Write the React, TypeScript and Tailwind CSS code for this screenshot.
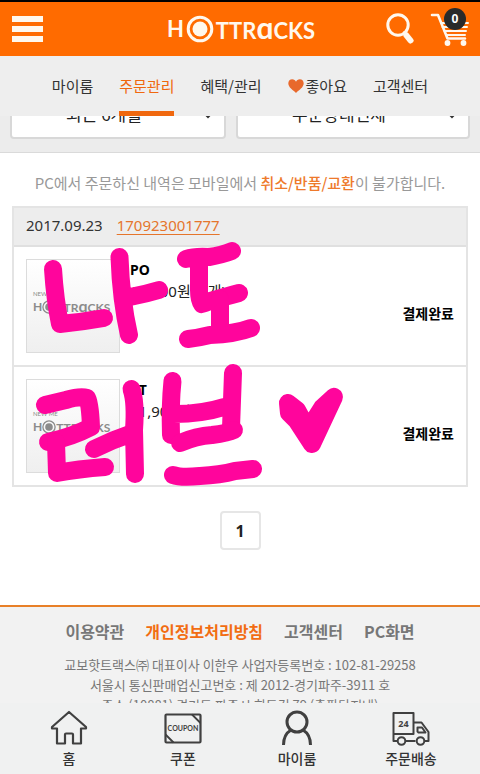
import React from 'react';
import clsx from 'clsx';

const tabs = [
  { label: '마이룸' },
  { label: '주문관리', active: true },
  { label: '혜택/관리' },
  { label: '좋아요', heart: true },
  { label: '고객센터' },
];

const orders = [
  { name: 'PO', price: '11,900원 (1개)', status: '결제완료' },
  { name: 'PT', price: '11,900원', status: '결제완료' },
];

const footerLinks = [
  { label: '이용약관' },
  { label: '개인정보처리방침', active: true },
  { label: '고객센터' },
  { label: 'PC화면' },
];

function Logo() {
  return (
    <a href="#home" className="flex h-8 items-center gap-0.5 font-['Lato',sans-serif] text-[22px] leading-8 font-bold text-[#fff8ee]">
      <span>H</span>
      <svg viewBox="0 0 28 28" className="size-7" aria-label="O">
        <circle cx="14" cy="14" r="11.800" fill="none" stroke="#fff8ee" strokeWidth="3" />
        <circle cx="14" cy="14" r="7.500" fill="#fff8ee" />
      </svg>
      <span>
        TTR<span className="text-[30px] leading-none">ɑ</span>CKS
      </span>
    </a>
  );
}

function ThumbLogo() {
  return (
    <div className="flex size-[94px] shrink-0 flex-col justify-center border border-[#dcdcdc] bg-linear-to-b from-white to-[#efefef] pb-1.5 pl-[6px] font-['Lato',sans-serif] text-[#8b8b8b]">
      <span className="text-[6px] leading-[8px]">NEW ME</span>
      <span className="flex items-center text-xs leading-4 font-bold">
        <span>H</span>
        <svg viewBox="0 0 14 14" className="size-[14px] shrink-0">
          <circle cx="7" cy="7" r="6.1" fill="none" stroke="currentColor" strokeWidth="1.3" />
          <circle cx="7" cy="7" r="3.8" fill="currentColor" />
        </svg>
        <span>
          TTR<span className="text-base leading-none">ɑ</span>CKS
        </span>
      </span>
    </div>
  );
}

function SearchIcon() {
  return (
    <svg viewBox="0 0 28 32" className="h-8 w-7" fill="none" stroke="#fff8ee" strokeLinecap="round">
      <circle cx="12" cy="12" r="10.2" strokeWidth="3" />
      <path d="M18.5 19.5l2 2.5" strokeWidth="3" />
      <path d="M20.5 22.5l4 5" strokeWidth="6" />
    </svg>
  );
}

function CartIcon() {
  return (
    <svg viewBox="0 0 40 34" className="h-[34px] w-10" fill="none" stroke="#fff8ee" strokeWidth="2.6" strokeLinecap="round" strokeLinejoin="round">
      <path d="M2 3h6l9.500 23.500h17.500" />
      <path d="M11 11h27M12.500 15h24.500M14.500 19h21.500M16 23h19" strokeWidth="2" />
      <circle cx="17.500" cy="31" r="2.900" fill="#fff8ee" stroke="none" />
      <circle cx="33.500" cy="31" r="2.900" fill="#fff8ee" stroke="none" />
    </svg>
  );
}

function HomeIcon() {
  return (
    <svg viewBox="0 0 38 36" className="h-9 w-[38px]" fill="none" stroke="#404040" strokeWidth="2.200" strokeLinejoin="round">
      <path d="M19 2L2 17v1.500h5V33.500h8V24.500q0-1 1-1h6q1 0 1 1V33.500h8V18.500h5V17z" />
    </svg>
  );
}

function CouponIcon() {
  return (
    <svg viewBox="0 0 38 36" className="h-9 w-[38px]" fill="none" stroke="#404040" strokeWidth="2.200">
      <rect x="1.500" y="4.500" width="35" height="28" rx="1" />
      <path d="M28 4.500l8.500 8.500M1.500 24.500l8 8" strokeWidth="1.800" />
      <text x="19" y="21" textAnchor="middle" fontSize="7" fontWeight="700" fill="#404040" stroke="none" fontFamily="Lato, sans-serif">
        COUPON
      </text>
    </svg>
  );
}

function PersonIcon() {
  return (
    <svg viewBox="0 0 38 36" className="h-9 w-[38px]" fill="none" stroke="#404040" strokeWidth="3">
      <circle cx="19" cy="12" r="10" />
      <path d="M5.500 35c0-6.500 2.500-12 7.500-15M32.500 35c0-6.500-2.500-12-7.500-15" />
    </svg>
  );
}

function TruckIcon() {
  return (
    <svg viewBox="0 0 38 36" className="h-9 w-[38px]" fill="none" stroke="#404040" strokeWidth="2" strokeLinejoin="round">
      <path d="M5 31H1.500V3h20v21H1.500M13.500 31h10M21.500 12.500h8l7 9.500v9h-4" />
      <path d="M25.500 21.500v-4h4.500l3.500 5h-7z" />
      <circle cx="9.500" cy="31" r="3.800" />
      <circle cx="28.500" cy="31" r="3.800" />
      <text x="11.500" y="17" textAnchor="middle" fontSize="9" fontWeight="700" fill="#404040" stroke="none" fontFamily="Noto Sans, sans-serif">
        24
      </text>
    </svg>
  );
}

// Marker handwriting drawn over the order list
function Scribble() {
  return (
    <svg
      viewBox="12 206 340 281"
      className="pointer-events-none absolute -top-0.5 -left-0.5 h-[281px] w-[340px]"
      fill="none"
      stroke="#ff059c"
      strokeWidth="18"
      strokeLinecap="round"
      strokeLinejoin="round"
    >
      <path d="M53 269Q55 300 60 324Q82 322 104 318" />
      <path d="M119.500 257Q121 300 129 335M130 297Q146 294 159 290" />
      <path d="M186 259Q195 256 209 257Q222 255 232 251M199 260L199 290Q199 300 202 304Q212 300 239 293" />
      <path d="M220 299L220 334M188 339Q198 338 210 335Q235 334 251 328" />
      <path d="M45 405L66 400Q80 396 87 398Q90 402 91 427Q72 437 48 442" />
      <path d="M56 442L57 473Q78 469 105 467" />
      <path d="M131.500 389Q136 402 134 430L135 474M94 449Q112 440 130 434" />
      <path d="M172.500 381Q170 405 171 435M233 373L231 428M174 414Q202 414 224 407" />
      <path d="M180 443Q196 436 212 435Q228 433 234 430" />
      <path d="M173 475Q181 478 200 476Q220 475 235 471L253 469" />
      <path d="M288 403L289 413L297 421L312 444L334 397L322 408L308 430L297 410Z" fill="#ff059c" />
    </svg>
  );
}

const navItems = [
  { label: '홈', icon: <HomeIcon /> },
  { label: '쿠폰', icon: <CouponIcon /> },
  { label: '마이룸', icon: <PersonIcon /> },
  { label: '주문배송', icon: <TruckIcon /> },
];

function FilterSelect({ label, value }: { label: string; value: string }) {
  return (
    <div className="relative">
      <select
        aria-label={label}
        className="h-[51px] w-full appearance-none rounded-sm border-2 border-[#d8d8d8] bg-white pr-7 text-center text-[17px] text-[#222] [text-align-last:center]"
      >
        <option>{value}</option>
      </select>
      <svg viewBox="0 0 12 8" className="pointer-events-none absolute top-[23px] right-3 h-2 w-3" fill="none" stroke="#333" strokeWidth="2">
        <path d="M1 1l5 5 5-5" />
      </svg>
    </div>
  );
}

export default function App() {
  return (
    <div className="flex h-screen flex-col bg-white font-['Noto_Sans_CJK_KR',sans-serif] text-[#333]">
      <header className="shrink-0">
        <div className="grid h-14 grid-cols-[1fr_auto_1fr] items-center border-t-2 border-black bg-[#ff6b00] pr-[10px] pl-3">
          <button type="button" aria-label="메뉴" className="flex w-[31px] flex-col gap-1">
            <span className="h-[6px] bg-[#fff8ee]" />
            <span className="h-[6px] bg-[#fff8ee]" />
            <span className="h-[6px] bg-[#fff8ee]" />
          </button>
          <Logo />
          <div className="flex items-center justify-end gap-4">
            <button type="button" aria-label="검색">
              <SearchIcon />
            </button>
            <button type="button" aria-label="장바구니" className="relative">
              <CartIcon />
              <span className="absolute -top-1 left-[14px] flex size-[22px] items-center justify-center rounded-full bg-[#2a2a2a] font-['Noto_Sans',sans-serif] text-xs font-bold text-white">
                0
              </span>
            </button>
          </div>
        </div>
        <nav className="flex h-[60px] justify-center gap-[26px] bg-[#eee] text-[15px]">
          {tabs.map((tab) => (
            <a
              key={tab.label}
              href="#tab"
              className={clsx(
                'flex items-center border-y-5 border-transparent',
                tab.active && 'border-b-[#f0680f] text-[#f0680f]'
              )}
            >
              {tab.heart && (
                <svg viewBox="0 0 16 14" className="mr-0.5 h-[14px] w-4" fill="#e8692c">
                  <path d="M8 14C5 11 .3 8.500.3 4.300.3 1.800 2 .2 4.200.2 6 .2 7.400 1.200 8 2.700 8.600 1.200 10 .2 11.800.2c2.200 0 3.900 1.600 3.900 4.100C15.700 8.500 11 11 8 14z" />
                </svg>
              )}
              {tab.label}
            </a>
          ))}
        </nav>
      </header>

      <main className="min-h-0 flex-1 overflow-y-auto [scrollbar-width:none]">
        <div className="overflow-hidden border-b border-[#dadada] bg-[#ececec] px-[10px] pb-[13px]">
          <div className="-mt-7 grid grid-cols-[12fr_13fr] gap-[10px]">
            <FilterSelect label="조회기간" value="최근 6개월" />
            <FilterSelect label="주문상태" value="주문상태전체" />
          </div>
        </div>

        <p className="pt-5 pb-[13px] text-center text-[15px] leading-5 text-[#999]">
          PC에서 주문하신 내역은 모바일에서 <span className="font-medium text-[#ee7a2b]">취소/반품/교환</span>이 불가합니다.
        </p>

        <section className="relative mx-3 border-2 border-[#e4e4e4] font-['Noto_Sans','Noto_Sans_CJK_KR',sans-serif]">
          <div className="flex h-[39px] items-center gap-[14px] border-b-2 border-[#e0e0e0] bg-[#ededed] px-3 pb-0.5 text-[15px]">
            <span>2017.09.23</span>
            <a href="#order" className="text-[#e5752c] underline underline-offset-3">170923001777</a>
          </div>
          <ul className="divide-y-2 divide-[#e4e4e4]">
            {orders.map((order) => (
              <li key={order.name} className="flex gap-[10px] px-3 py-3">
                <ThumbLogo />
                <div className="flex-1 text-[15px] leading-[21px] text-[#222]">
                  <strong className="block text-sm leading-[22px] font-bold text-black">{order.name}</strong>
                  {order.price}
                </div>
                <strong className="mt-11 text-sm leading-[22px] font-bold text-black">{order.status}</strong>
              </li>
            ))}
          </ul>
          <Scribble />
        </section>

        <div className="mt-6 mb-[55px] flex justify-center">
          <button type="button" className="h-[39px] w-[41px] rounded-sm border-2 border-[#e6e6e6] font-['Noto_Sans',sans-serif] text-base font-bold text-[#222]">
            1
          </button>
        </div>

        <footer className="border-t-2 border-[#e88028] bg-[#f2f2f2] pt-3 pb-6 text-center text-[#777]">
          <div className="flex justify-center gap-[21px] text-base leading-6 font-bold">
            {footerLinks.map((link) => (
              <a key={link.label} href="#link" className={clsx(link.active && 'text-[#f26d12]')}>
                {link.label}
              </a>
            ))}
          </div>
          <address className="mt-3 text-[13px] leading-5 not-italic">
            <p>교보핫트랙스㈜ 대표이사 이한우 사업자등록번호 : 102-81-29258</p>
            <p>서울시 통신판매업신고번호 : 제 2012-경기파주-3911 호</p>
            <p>주소 (10881) 경기도 파주시 회동길 79 (출판단지내)</p>
          </address>
        </footer>
      </main>

      <nav className="grid h-[71px] shrink-0 grid-cols-4 bg-[#f0f1f1] px-3">
        {navItems.map((item) => (
          <a key={item.label} href="#nav" className="flex flex-col items-center pt-[7px] text-sm leading-5 font-medium text-[#333]">
            {item.icon}
            <span className="mt-0.5">{item.label}</span>
          </a>
        ))}
      </nav>
    </div>
  );
}
